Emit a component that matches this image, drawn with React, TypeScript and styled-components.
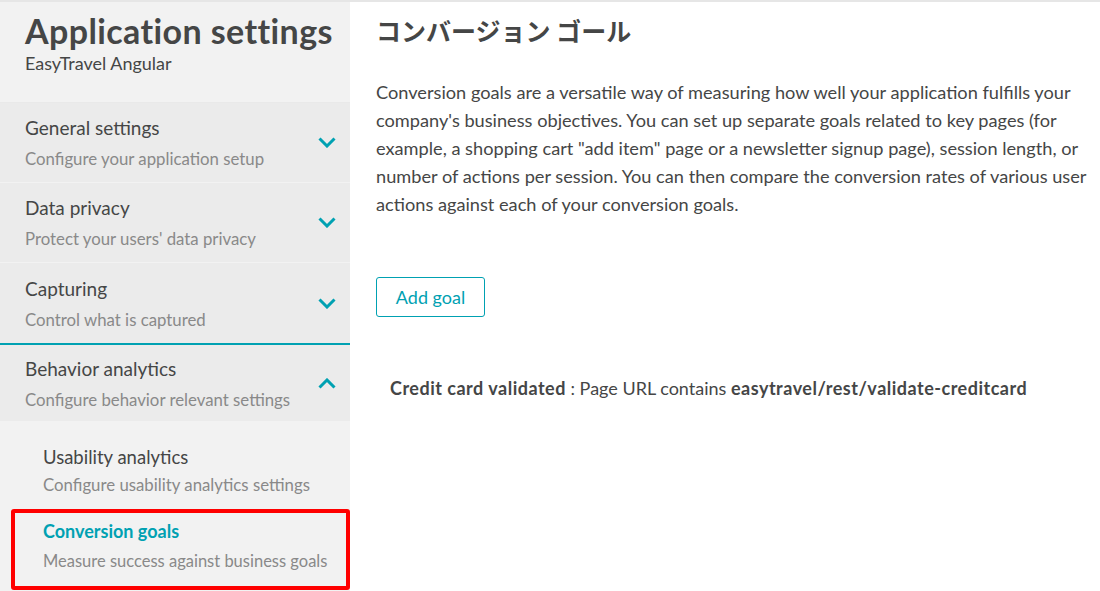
import React from "react";
import styled, { createGlobalStyle } from "styled-components";

const Global = createGlobalStyle`
  html, body { margin: 0; padding: 0; background: #fff; }
  body { font-family: Lato, "Noto Sans CJK JP", sans-serif; color: #454646; }
  * { box-sizing: border-box; }
`;

const Page = styled.div`
  display: flex;
  width: 1100px;
  height: 591px;
  border-top: 2px solid #e6e6e6;
  overflow: hidden;
`;

const Sidebar = styled.aside`
  width: 350px;
  flex: none;
  display: flex;
  flex-direction: column;
  background: #f2f2f2;
`;

const SideHeader = styled.div`
  height: 101px;
  padding: 8px 0 0 25px;
  border-bottom: 1px solid #e9e9e9;
`;

const AppTitle = styled.h1`
  margin: 0;
  font-size: 34px;
  font-weight: 700;
  line-height: 42px;
  color: #454646;
  letter-spacing: 0.4px;
`;

const AppSub = styled.div`
  font-size: 18px;
  line-height: 22px;
  color: #454646;
`;

const Section = styled.div<{ $accent?: boolean }>`
  height: ${(p) => (p.$accent ? 82 : 80)}px;
  background: #ebebeb;
  display: flex;
  align-items: center;
  justify-content: space-between;
  padding: 0 14px 0 25px;
  border-bottom: ${(p) => (p.$accent ? "2px solid #00a1b2" : "1px solid #f2f2f2")};
`;

const Expanded = styled(Section)`
  height: 76px;
  border-bottom: none;
`;

const SectionText = styled.div`
  display: flex;
  flex-direction: column;
  gap: 9px;
`;

const SectionTitle = styled.div`
  font-size: 19px;
  line-height: 24px;
  color: #454646;
`;

const SectionSub = styled.div<{ $size?: number }>`
  font-size: ${(p) => p.$size ?? 16.8}px;
  line-height: 20px;
  color: #898989;
`;

const Chevron = ({ up }: { up?: boolean }) => (
  <svg width="18" height="11" viewBox="0 0 18 11">
    <path
      d={up ? "M1.5 9.5 L9 2 L16.5 9.5" : "M1.5 1.5 L9 9 L16.5 1.5"}
      fill="none"
      stroke="#00a1b2"
      strokeWidth="3"
    />
  </svg>
);

const SubList = styled.div`
  display: flex;
  flex-direction: column;
  padding: 21px 0 0 11px;
  gap: 8px;
`;

const SubItem = styled.div<{ $active?: boolean }>`
  width: 339px;
  padding: ${(p) => (p.$active ? "7px 0 15px 28px" : "4px 0 6px 32px")};
  border: ${(p) => (p.$active ? "4px solid #ff0000" : "none")};
  border-radius: 3px;
  display: flex;
  flex-direction: column;
  gap: ${(p) => (p.$active ? 9 : 7)}px;
`;

const SubTitle = styled.div<{ $active?: boolean }>`
  font-size: ${(p) => (p.$active ? 18 : 18.5)}px;
  line-height: 22px;
  font-weight: ${(p) => (p.$active ? 700 : 400)};
  color: ${(p) => (p.$active ? "#00a1b2" : "#454646")};
`;

const Main = styled.main`
  flex: 1;
  padding: 10px 0 0 26px;
`;

const Heading = styled.h2`
  margin: 0;
  font-family: "Noto Sans CJK JP", sans-serif;
  font-size: 25px;
  font-weight: 700;
  line-height: 36px;
  color: #454646;
`;

const Para = styled.p`
  margin: 30px 0 0;
  width: 720px;
  font-size: 18.2px;
  line-height: 28px;
  color: #454646;
`;

const Button = styled.button`
  margin-top: 59px;
  width: 109px;
  height: 40px;
  border: 1px solid #00a1b2;
  border-radius: 3px;
  background: #fff;
  color: #00a1b2;
  font-family: Lato, sans-serif;
  font-size: 18px;
  padding: 0;
`;

const Goal = styled.div`
  margin: 59px 0 0 14px;
  font-size: 18px;
  line-height: 24px;
  color: #454646;
  b { font-weight: 700; letter-spacing: 0.5px; }
`;

export default function App() {
  return (
    <>
      <Global />
      <Page>
        <Sidebar>
          <SideHeader>
            <AppTitle>Application settings</AppTitle>
            <AppSub>EasyTravel Angular</AppSub>
          </SideHeader>
          <Section>
            <SectionText>
              <SectionTitle>General settings</SectionTitle>
              <SectionSub>Configure your application setup</SectionSub>
            </SectionText>
            <Chevron />
          </Section>
          <Section>
            <SectionText>
              <SectionTitle>Data privacy</SectionTitle>
              <SectionSub>Protect your users' data privacy</SectionSub>
            </SectionText>
            <Chevron />
          </Section>
          <Section $accent>
            <SectionText>
              <SectionTitle>Capturing</SectionTitle>
              <SectionSub>Control what is captured</SectionSub>
            </SectionText>
            <Chevron />
          </Section>
          <Expanded>
            <SectionText>
              <SectionTitle>Behavior analytics</SectionTitle>
              <SectionSub>Configure behavior relevant settings</SectionSub>
            </SectionText>
            <Chevron up />
          </Expanded>
          <SubList>
            <SubItem>
              <SubTitle>Usability analytics</SubTitle>
              <SectionSub>Configure usability analytics settings</SectionSub>
            </SubItem>
            <SubItem $active>
              <SubTitle $active>Conversion goals</SubTitle>
              <SectionSub $size={16.5}>Measure success against business goals</SectionSub>
            </SubItem>
          </SubList>
        </Sidebar>
        <Main>
          <Heading>コンバージョン ゴール</Heading>
          <Para>
            Conversion goals are a versatile way of measuring how well your application fulfills your
            company's business objectives. You can set up separate goals related to key pages (for
            example, a shopping cart "add item" page or a newsletter signup page), session length, or
            number of actions per session. You can then compare the conversion rates of various user
            actions against each of your conversion goals.
          </Para>
          <Button>Add goal</Button>
          <Goal>
            <b>Credit card validated</b> : Page URL contains <b>easytravel/rest/validate-creditcard</b>
          </Goal>
        </Main>
      </Page>
    </>
  );
}
